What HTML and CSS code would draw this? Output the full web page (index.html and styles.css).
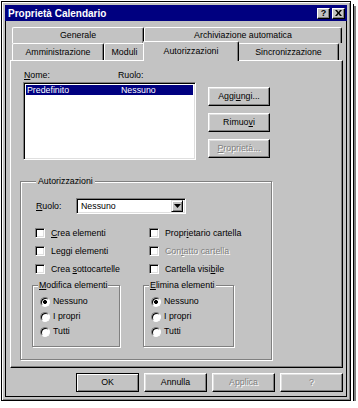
FILE: index.html
```html
<!DOCTYPE html>
<html lang="it">
<head>
  <meta charset="UTF-8" />
  <title>Proprietà Calendario</title>
  <link rel="stylesheet" href="styles.css">
</head>
<body>
<div class="window">
  <div class="titlebar">
    <span class="title">Proprietà Calendario</span>
    <span class="cap-btns">
      <span class="cap-btn">?</span>
      <span class="cap-btn">
        <svg width="7" height="6" viewBox="0 0 7 6"><path d="M0 0h2l1.5 2L5 0h2L4.5 3 7 6H5L3.5 4 2 6H0l2.5-3z" fill="#000"/></svg>
      </span>
    </span>
  </div>

  <div class="tabs">
    <div class="tab-row back">
      <div class="tab" style="width:132px">Generale</div>
      <div class="tab" style="width:198px">Archiviazione automatica</div>
    </div>
    <div class="tab-row front">
      <div class="tab" style="width:92px">Amministrazione</div>
      <div class="tab" style="width:41px">Moduli</div>
      <div class="tab selected" style="width:96px">Autorizzazioni</div>
      <div class="tab" style="width:101px">Sincronizzazione</div>
    </div>
  </div>

  <div class="panel">
    <div class="users">
      <div class="users-list">
        <div class="list-head">
          <span class="col-name"><u>N</u>ome:</span>
          <span>Ruolo:</span>
        </div>
        <div class="listbox">
          <div class="list-row selected">
            <span class="col-name">Predefinito</span>
            <span>Nessuno</span>
          </div>
        </div>
      </div>
      <div class="side-buttons">
        <button class="btn">Aggi<u>u</u>ngi...</button>
        <button class="btn">Rimuo<u>v</u>i</button>
        <button class="btn disabled"><u>P</u>roprietà...</button>
      </div>
    </div>

    <fieldset class="group perms">
      <legend>Autorizzazioni</legend>
      <div class="role-row">
        <span class="role-label"><u>R</u>uolo:</span>
        <div class="combo">
          <span class="combo-text">Nessuno</span>
          <span class="combo-arrow">
            <svg width="7" height="4" viewBox="0 0 7 4"><path d="M0 0h7L3.5 4z" fill="#000"/></svg>
          </span>
        </div>
      </div>

      <div class="checks">
        <div class="check"><span class="box"></span><span><u>C</u>rea elementi</span></div>
        <div class="check"><span class="box"></span><span>Propr<u>i</u>etario cartella</span></div>
        <div class="check"><span class="box"></span><span>Leggi elementi</span></div>
        <div class="check disabled"><span class="box"></span><span>Con<u>t</u>atto cartella</span></div>
        <div class="check"><span class="box"></span><span>Crea <u>s</u>ottocartelle</span></div>
        <div class="check"><span class="box"></span><span>Cartella visi<u>b</u>ile</span></div>
      </div>

      <div class="subgroups">
        <fieldset class="group sub" style="width:88px">
          <legend><u>M</u>odifica elementi</legend>
          <div class="radio-row"><span class="radio on"></span><span>Nessuno</span></div>
          <div class="radio-row"><span class="radio"></span><span>I propri</span></div>
          <div class="radio-row"><span class="radio"></span><span>Tutti</span></div>
        </fieldset>
        <fieldset class="group sub" style="width:91px">
          <legend><u>E</u>limina elementi</legend>
          <div class="radio-row"><span class="radio on"></span><span>Nessuno</span></div>
          <div class="radio-row"><span class="radio"></span><span>I propri</span></div>
          <div class="radio-row"><span class="radio"></span><span>Tutti</span></div>
        </fieldset>
      </div>
    </fieldset>
  </div>

  <div class="footer">
    <button class="btn wide default">OK</button>
    <button class="btn wide">Annulla</button>
    <button class="btn wide disabled">Applica</button>
    <button class="btn wide disabled">?</button>
  </div>
</div>
</body>
</html>
```

FILE: styles.css
```css
:root {
  --face: #c3c3c3;
  --light: #dfdfdf;
  --shadow: #808080;
  --navy: #000080;
}

body {
  margin: 0;
  padding: 1px 0 0 1px;
  background: #fff;
  font-family: "Liberation Sans", Arial, sans-serif;
  font-size: 8.8px;
  line-height: 11px;
  color: #000;
}

u {
  text-decoration: underline;
  text-underline-offset: 1px;
}

.window {
  box-sizing: border-box;
  width: 350px;
  height: 400px;
  padding: 3px;
  background: var(--face);
  border: 1px solid #000;
  box-shadow:
    inset 1px 1px 0 #fff,
    inset -1px -1px 0 var(--shadow),
    inset 3px 3px 0 var(--face),
    inset -3px -3px 0 var(--face),
    inset 4px 4px 0 #000,
    inset -4px -4px 0 #000,
    2px 2px 0 #fff,
    3px 3px 0 #000,
    5px 5px 0 var(--shadow);
}

/* title bar */
.titlebar {
  height: 16px;
  background: var(--navy);
  color: #fff;
  display: flex;
  align-items: center;
  justify-content: space-between;
  padding: 0 2px 0 3px;
  font-size: 10px;
  font-weight: bold;
}

.cap-btns {
  display: flex;
  gap: 2px;
}

.cap-btn {
  box-sizing: border-box;
  width: 13px;
  height: 11px;
  background: var(--face);
  border: 1px solid;
  border-color: #fff #000 #000 #fff;
  box-shadow: inset -1px -1px 0 var(--shadow);
  color: #000;
  font-size: 9px;
  line-height: 9px;
  display: flex;
  align-items: center;
  justify-content: center;
}

/* tabs */
.tabs {
  margin: 6px 4px 0 7px;
}

.tab-row {
  display: flex;
  height: 16px;
}

.tab-row.front {
  height: 17px;
}

.tab {
  box-sizing: border-box;
  border-top: 1px solid #fff;
  border-left: 1px solid #fff;
  border-right: 1px solid #000;
  border-radius: 2px 2px 0 0;
  box-shadow: inset -1px 0 0 var(--shadow);
  display: flex;
  align-items: center;
  justify-content: center;
  white-space: nowrap;
  background: var(--face);
}

.tab.selected {
  position: relative;
  z-index: 1;
  margin: -2px -1px -1px -2px;
  height: 20px;
  padding-bottom: 1px;
}

/* main panel */
.panel {
  box-sizing: border-box;
  height: 308px;
  margin: 0 4px 0 5px;
  padding: 9px 0 0 9px;
  border-top: 1px solid #fff;
  border-left: 1px solid #fff;
  border-right: 1px solid #000;
  border-bottom: 1px solid #000;
  box-shadow: inset -1px -1px 0 var(--shadow);
}

.users {
  display: flex;
  gap: 12px;
  margin-left: 3px;
}

.users-list {
  width: 173px;
}

.list-head {
  display: flex;
  height: 12px;
  padding-left: 1px;
}

.col-name {
  width: 94px;
}

.listbox {
  box-sizing: border-box;
  height: 78px;
  padding: 2px;
  background: #fff;
  border: 1px solid;
  border-color: var(--shadow) #fff #fff var(--shadow);
  box-shadow: inset 1px 1px 0 #000, inset -1px -1px 0 var(--light);
}

.list-row {
  display: flex;
  height: 10px;
  line-height: 10px;
  padding-left: 1px;
}

.list-row.selected {
  background: var(--navy);
  color: #fff;
}

.side-buttons {
  display: flex;
  flex-direction: column;
  gap: 7px;
  margin-top: 17px;
}

/* buttons */
.btn {
  box-sizing: border-box;
  width: 62px;
  height: 19px;
  padding: 0;
  background: var(--face);
  font: inherit;
  color: #000;
  border: 1px solid;
  border-color: #fff #000 #000 #fff;
  box-shadow: inset -1px -1px 0 var(--shadow), inset 1px 1px 0 var(--light);
}

.btn.wide {
  width: 63px;
}

.btn.default {
  border-color: #000;
  box-shadow: inset 1px 1px 0 #fff, inset -1px -1px 0 var(--shadow);
}

.btn.disabled,
.check.disabled {
  color: var(--shadow);
  text-shadow: 1px 1px 0 #fff;
}

/* group boxes */
.group {
  box-sizing: border-box;
  margin: 0;
  border: 1px solid var(--shadow);
  box-shadow: inset 1px 1px 0 #fff, 1px 1px 0 #fff;
  min-width: 0;
}

.group legend {
  background: var(--face);
  line-height: 11px;
}

.perms {
  width: 252px;
  height: 184px;
  margin-top: 16px;
  padding: 0 0 0 14px;
}

.perms legend {
  padding: 0 2px;
  margin-left: 1px;
}

.role-row {
  display: flex;
  align-items: center;
  height: 16px;
  margin-top: 11px;
}

.role-label {
  width: 40px;
  padding-left: 1px;
}

.combo {
  box-sizing: border-box;
  display: flex;
  align-items: center;
  width: 110px;
  height: 16px;
  padding: 2px;
  background: #fff;
  border: 1px solid;
  border-color: var(--shadow) #fff #fff var(--shadow);
  box-shadow: inset 1px 1px 0 #000, inset -1px -1px 0 var(--light);
}

.combo-text {
  flex: 1;
  padding-left: 2px;
}

.combo-arrow {
  box-sizing: border-box;
  width: 12px;
  height: 12px;
  background: var(--face);
  border: 1px solid;
  border-color: var(--light) #000 #000 var(--light);
  box-shadow: inset 1px 1px 0 #fff, inset -1px -1px 0 var(--shadow);
  display: flex;
  align-items: center;
  justify-content: center;
}

.checks {
  display: grid;
  grid-template-columns: 114px auto;
  grid-auto-rows: 18px;
  margin-top: 10px;
}

.check {
  display: flex;
  align-items: center;
  gap: 6px;
  white-space: nowrap;
}

.box {
  box-sizing: border-box;
  width: 10px;
  height: 10px;
  background: #fff;
  border: 1px solid;
  border-color: var(--shadow) #fff #fff var(--shadow);
  box-shadow: inset 1px 1px 0 #000, inset -1px -1px 0 var(--light);
}

.subgroups {
  display: flex;
  gap: 23px;
  margin: 2px 0 0 -3px;
}

.sub {
  height: 67px;
  padding: 3px 0 0 7px;
}

.sub legend {
  padding: 0 1px;
  margin-left: -2px;
}

.radio-row {
  display: flex;
  align-items: center;
  gap: 3px;
  height: 15px;
}

.radio {
  box-sizing: border-box;
  width: 10px;
  height: 10px;
  border-radius: 50%;
  background: #fff;
  border: 1px solid;
  border-color: var(--shadow) #fff #fff var(--shadow);
  box-shadow: inset 1px 1px 0 #000;
}

.radio.on {
  background: radial-gradient(circle, #000 0 1.8px, #fff 2.2px);
}

/* bottom buttons */
.footer {
  display: flex;
  justify-content: flex-end;
  gap: 5px;
  margin-top: 5px;
  padding-right: 4px;
}
```
